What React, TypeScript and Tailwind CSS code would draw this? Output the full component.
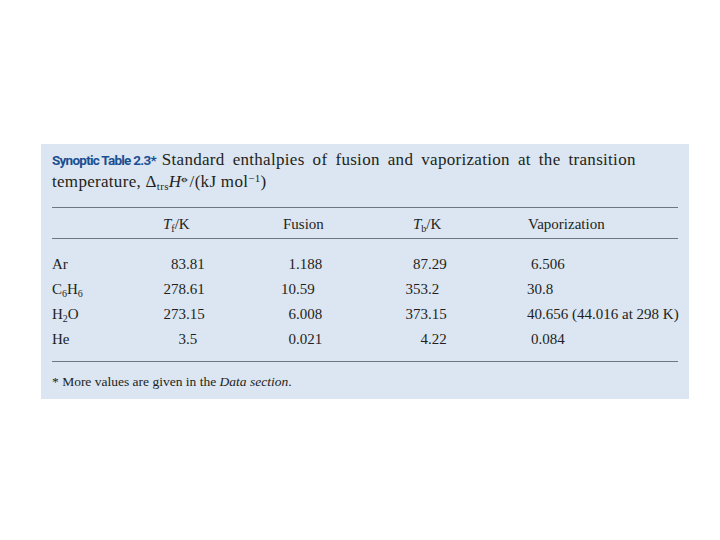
import React from "react";

type Num = { i: string; f: string };
const n = (s: string): Num => {
  const [i, f] = s.split(".");
  return { i, f: f !== undefined ? "." + f : "" };
};

const rows: {
  label: React.ReactNode;
  tf: string;
  fus: string;
  tb: string;
  vap: string;
  vapPad: string;
}[] = [
  { label: <>Ar</>, tf: "83.81", fus: "1.188", tb: "87.29", vap: "6.506", vapPad: "pl-[39px]" },
  {
    label: (
      <>
        C<sub className="text-[10px]">6</sub>H<sub className="text-[10px]">6</sub>
      </>
    ),
    tf: "278.61",
    fus: "10.59",
    tb: "353.2",
    vap: "30.8",
    vapPad: "pl-[35px]",
  },
  {
    label: (
      <>
        H<sub className="text-[10px]">2</sub>O
      </>
    ),
    tf: "273.15",
    fus: "6.008",
    tb: "373.15",
    vap: "40.656 (44.016 at 298 K)",
    vapPad: "pl-[35px]",
  },
  { label: <>He</>, tf: "3.5", fus: "0.021", tb: "4.22", vap: "0.084", vapPad: "pl-[39px]" },
];

function Dec({ v, w, cls }: { v: string; w: string; cls: string }) {
  const x = n(v);
  return (
    <div className={`flex shrink-0 ${cls}`}>
      <span className={`${w} text-right`}>{x.i}</span>
      <span>{x.f}</span>
    </div>
  );
}

export default function App() {
  return (
    <div
      className="w-[720px] h-[540px] bg-white pt-[144px] pl-[41px]"
      style={{ fontFamily: '"Liberation Serif", "DejaVu Serif", serif' }}
    >
      <div className="w-[648px] h-[255px] bg-[#dbe6f2] px-[11px] pt-[5px] text-[#231f20]">
        <div className="text-[17px] leading-[21px] tracking-[0.3px] whitespace-nowrap">
          <div className="[word-spacing:3.5px]">
            <span
              className="text-[13.5px] font-bold text-[#1b4f91] tracking-[-0.75px] mr-[6px] [word-spacing:0px]"
              style={{ fontFamily: 'Roboto, "Liberation Sans", Arial, sans-serif' }}
            >
              Synoptic Table 2.3*
            </span>
            Standard enthalpies of fusion and vaporization at the transition
          </div>
          <div>
            temperature, Δ<sub className="text-[11px]">trs</sub>
            <i>H</i>
            <sup className="text-[10px]">⦵</sup>/(kJ mol<sup className="text-[11px]">−1</sup>)
          </div>
        </div>

        <div className="mt-[15px] border-t border-[#6b7785]" />
        <div className="flex h-[31px] pt-[2px] text-[15px] leading-[28px] border-b border-[#6b7785]">
          <div className="w-[100px] shrink-0" />
          <div className="w-[100px] shrink-0 pl-[11px]">
            <i>T</i>
            <sub className="text-[10px]">f</sub>/K
          </div>
          <div className="w-[100px] shrink-0 pl-[31px]">Fusion</div>
          <div className="w-[140px] shrink-0 pl-[61px]">
            <i>T</i>
            <sub className="text-[10px]">b</sub>/K
          </div>
          <div className="pl-[36px] whitespace-nowrap">Vaporization</div>
        </div>

        <div className="mt-[13px] text-[15px] leading-[25px]">
          {rows.map((r, k) => (
            <div key={k} className="flex h-[25px]">
              <div className="w-[100px] shrink-0">{r.label}</div>
              <Dec v={r.tf} w="w-[34px]" cls="w-[100px]" />
              <Dec v={r.fus} w="w-[44px]" cls="w-[100px]" />
              <Dec v={r.tb} w="w-[76px]" cls="w-[140px]" />
              <div className={`${r.vapPad} whitespace-nowrap`}>{r.vap}</div>
            </div>
          ))}
        </div>

        <div className="mt-[9px] border-t border-[#6b7785]" />
        <div className="mt-[10px] text-[13.5px] leading-[20px]">
          * More values are given in the <i>Data section</i>.
        </div>
      </div>
    </div>
  );
}
